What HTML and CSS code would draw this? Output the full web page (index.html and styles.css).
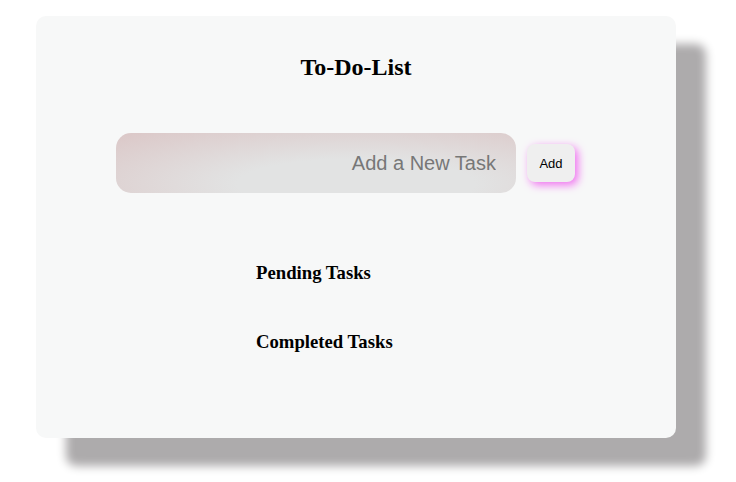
FILE: index.html
```html
<!DOCTYPE html>
<html lang="en">
<head>
    <meta charset="UTF-8">
    <meta name="viewport" content="width=device-width, initial-scale=1.0">
    <title>To-Do-List</title>
    <link rel="stylesheet" href="styles.css">
</head>
<body>
    <div id="app">
        <h2 class="title">To-Do-List</h2>

        <div class="add-row">
            <input type="text" id="new-task" placeholder="Add a New Task">
            <button id="add-btn">Add</button>
        </div>

        <div class="lists">
            <h3>Pending Tasks</h3>
            <ul id="pending-list"></ul>
            <h3>Completed Tasks</h3>
            <ul id="completed-list"></ul>
        </div>
    </div>
</body>
</html>
```

FILE: styles.css
```css
body {
    margin: 0;
    padding: 16px 0 44px 36px;
    background-color: white;
    font-family: "Liberation Serif", "Times New Roman", serif;
}

#app {
    width: 640px;
    height: 422px;
    box-sizing: border-box;
    padding-top: 38px;
    background-color: #f7f8f8;
    border-radius: 10px;
    box-shadow: 30px 28px 10px #adabac;
}

.title {
    margin: 0;
    font-size: 24px;
    text-align: center;
}

.add-row {
    display: flex;
    align-items: center;
    gap: 11px;
    margin-top: 52px;
    padding-left: 80px;
}

#new-task {
    width: 400px;
    height: 60px;
    box-sizing: border-box;
    padding: 0 20px;
    border: none;
    border-radius: 15px;
    outline: none;
    text-align: right;
    font-family: "Liberation Sans", Arial, sans-serif;
    font-size: 20px;
    background: radial-gradient(ellipse at 60% 85%, #e2e3e3 35%, #dbc7c7 100%);
}

#new-task::placeholder {
    color: #777777;
}

#add-btn {
    width: 48px;
    height: 38px;
    border: none;
    border-radius: 8px;
    background-color: #efefef;
    font-family: "Liberation Sans", Arial, sans-serif;
    font-size: 13px;
    color: black;
    box-shadow: 3px 3px 8px #f070f0;
    cursor: pointer;
}

.lists {
    padding-left: 220px;
    margin-top: 69px;
}

.lists h3 {
    margin: 0;
    font-size: 1.17em;
}

.lists ul {
    margin: 0;
    padding: 0;
    height: 47px;
}
```
